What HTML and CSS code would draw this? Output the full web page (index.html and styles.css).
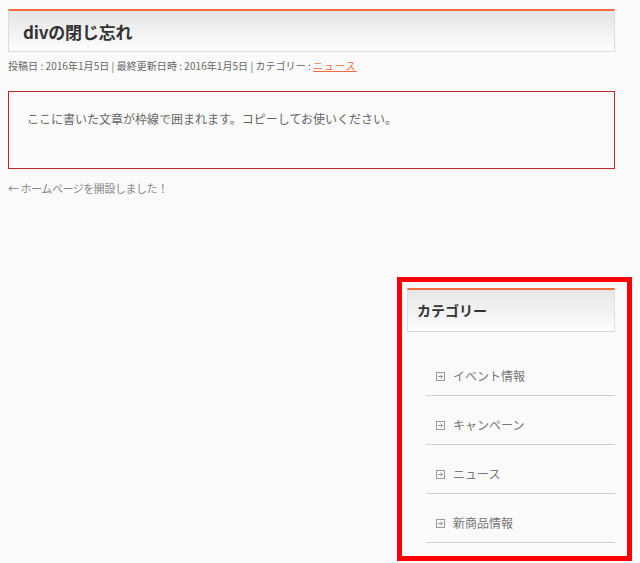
FILE: index.html
```html
<!DOCTYPE html>
<html lang="ja">
<head>
<meta charset="utf-8">
<title>divの閉じ忘れ</title>
<link rel="stylesheet" href="styles.css">
</head>
<body>
<div class="page">
  <article class="post">
    <h1 class="post-title">divの閉じ忘れ</h1>
    <p class="post-meta">投稿日 : 2016年1月5日 | 最終更新日時 : 2016年1月5日 | カテゴリー : <a class="meta-link" href="#">ニュース</a></p>
    <div class="framed">ここに書いた文章が枠線で囲まれます。コピーしてお使いください。</div>
    <p class="prev-link">← ホームページを開設しました！</p>
  </article>
  <aside class="sidebar">
    <h2 class="widget-title">カテゴリー</h2>
    <ul class="cat-list">
      <li class="cat-item"><svg class="cat-icon" width="9" height="9" viewBox="0 0 9 9"><rect x="0.5" y="0.5" width="8" height="8" fill="none" stroke="#9a9a9a"/><path d="M2 4.5H6.5M4.5 2.5L6.5 4.5L4.5 6.5" fill="none" stroke="#9a9a9a"/></svg><span>イベント情報</span></li>
      <li class="cat-item"><svg class="cat-icon" width="9" height="9" viewBox="0 0 9 9"><rect x="0.5" y="0.5" width="8" height="8" fill="none" stroke="#9a9a9a"/><path d="M2 4.5H6.5M4.5 2.5L6.5 4.5L4.5 6.5" fill="none" stroke="#9a9a9a"/></svg><span>キャンペーン</span></li>
      <li class="cat-item"><svg class="cat-icon" width="9" height="9" viewBox="0 0 9 9"><rect x="0.5" y="0.5" width="8" height="8" fill="none" stroke="#9a9a9a"/><path d="M2 4.5H6.5M4.5 2.5L6.5 4.5L4.5 6.5" fill="none" stroke="#9a9a9a"/></svg><span>ニュース</span></li>
      <li class="cat-item"><svg class="cat-icon" width="9" height="9" viewBox="0 0 9 9"><rect x="0.5" y="0.5" width="8" height="8" fill="none" stroke="#9a9a9a"/><path d="M2 4.5H6.5M4.5 2.5L6.5 4.5L4.5 6.5" fill="none" stroke="#9a9a9a"/></svg><span>新商品情報</span></li>
    </ul>
    <div class="highlight"></div>
  </aside>
</div>
</body>
</html>
```
FILE: styles.css
```css
html, body {
  margin: 0;
  padding: 0;
  background: #fafafa;
}
body {
  font-family: "Noto Sans CJK JP", "Noto Sans", sans-serif;
  color: #666;
}
.page {
  width: 607px;
  margin-left: 8px;
  padding-top: 9px;
  padding-bottom: 20px;
}
.post-title {
  margin: 0;
  height: 40px;
  padding: 0 14px;
  border: 1px solid #dcdcdc;
  border-top: 2px solid #f46a3c;
  background: linear-gradient(#e4e4e4, #f6f6f6 70%, #fdfdfd);
  font-size: 17px;
  font-weight: bold;
  line-height: 42px;
  color: #333;
  letter-spacing: -0.2px;
}
.post-meta {
  margin: 7px 0 0;
  font-size: 10px;
  line-height: 14px;
  color: #666;
  white-space: nowrap;
  letter-spacing: 0.05px;
}
.meta-link {
  color: #f46a3c;
  text-decoration: underline;
  letter-spacing: 1px;
}
.framed {
  margin-top: 18px;
  border: 1px solid #c4252b;
  padding: 19px 18px 41px;
  font-size: 12px;
  line-height: 16px;
  color: #666;
}
.prev-link {
  margin: 12px 0 0;
  font-size: 11px;
  line-height: 14px;
  color: #888;
  letter-spacing: -0.45px;
}
.sidebar {
  position: relative;
  width: 208px;
  margin: 93px 0 0 auto;
}
.widget-title {
  margin: 0;
  height: 41px;
  padding: 0 9px;
  border: 1px solid #e0e0e0;
  border-top: 2px solid #f46a3c;
  border-bottom: 1px solid #d6d6d6;
  background: linear-gradient(#e6e6e6, #f6f6f6 70%, #fdfdfd);
  font-size: 14px;
  font-weight: bold;
  line-height: 41px;
  color: #333;
}
.cat-list {
  list-style: none;
  margin: 15px 0 0 19px;
  padding: 0;
}
.cat-item {
  display: flex;
  align-items: center;
  gap: 8px;
  padding: 21px 0 11px 10px;
  line-height: 16px;
  font-size: 12px;
  color: #777;
  border-bottom: 1px solid #cfcfcf;
}
.cat-icon {
  flex: none;
}
.highlight {
  position: absolute;
  top: -11px;
  left: -10px;
  width: 225px;
  height: 274px;
  border: 5px solid #ff0000;
}
```
